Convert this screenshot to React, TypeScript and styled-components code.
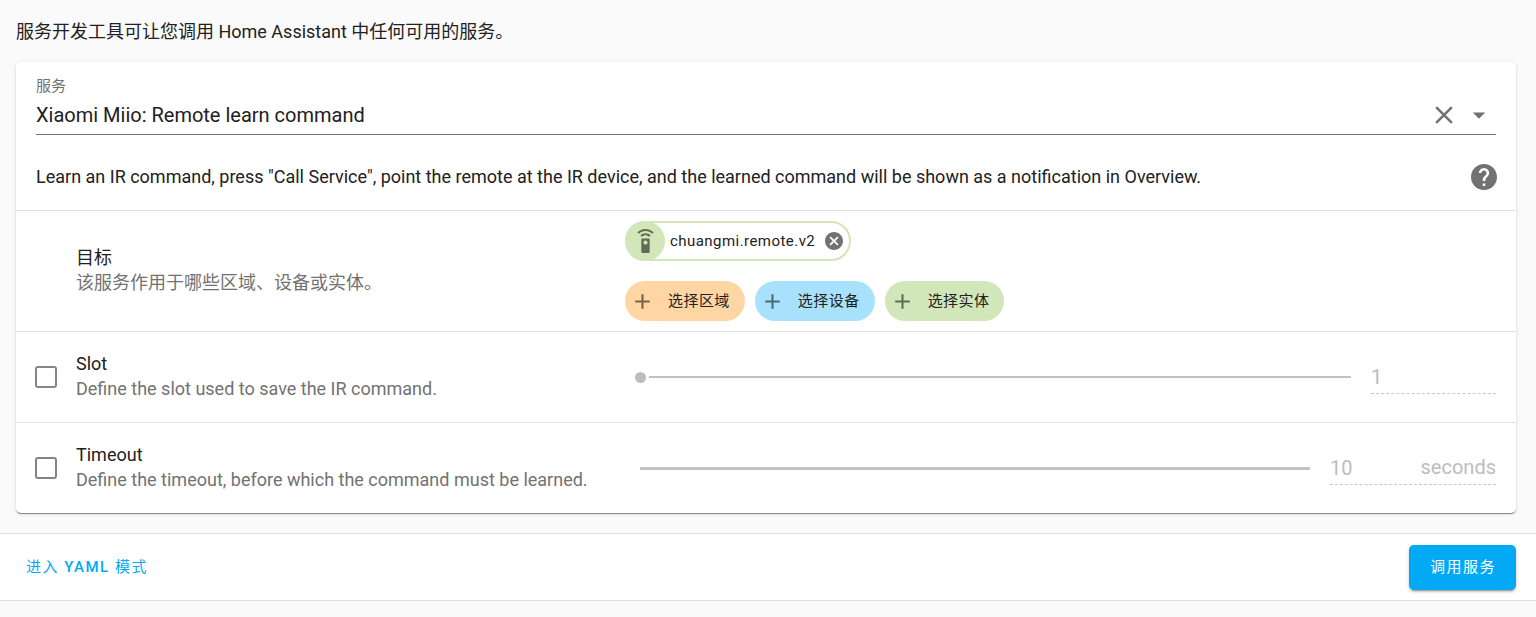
import React, { useState } from "react";
import styled, { createGlobalStyle, css } from "styled-components";

const color = {
  text: "#212121",
  secondary: "#727272",
  disabled: "#bdbdbd",
  divider: "#e0e0e0",
  primary: "#03a9f4",
  area: "#fed6a4",
  device: "#a8e1fb",
  entity: "#d2e7b9",
};

const GlobalStyle = createGlobalStyle`
  *, *::before, *::after { box-sizing: border-box; }
  body {
    margin: 0;
    background: #fafafa;
    color: ${color.text};
    font-family: Roboto, "Noto Sans CJK SC", sans-serif;
    font-size: 18px;
    line-height: 25px;
  }
  button, input { font: inherit; color: inherit; }
  button { padding: 0; border: 0; background: none; cursor: pointer; }
  p, h2 { margin: 0; font-size: inherit; font-weight: 400; }
`;

const Content = styled.main`
  padding: 19px 20px 20px 16px;
`;

const Intro = styled.p`
  margin-bottom: 18px;
`;

const Card = styled.section`
  background: #fff;
  border-radius: 5px;
  box-shadow: 0 2px 1px -1px rgba(0, 0, 0, 0.3), 0 1px 1px rgba(0, 0, 0, 0.18),
    0 1px 4px rgba(0, 0, 0, 0.12);
`;

const Picker = styled.div`
  padding: 12px 20px 0;
`;

const PickerLabel = styled.label`
  display: block;
  font-size: 15px;
  color: ${color.secondary};
`;

const PickerField = styled.div`
  display: flex;
  align-items: center;
  gap: 5px;
  height: 36px;
  padding-right: 2px;
  border-bottom: 1px solid ${color.secondary};
`;

const PickerInput = styled.input`
  flex: 1;
  min-width: 0;
  height: 30px;
  margin-bottom: 4px;
  padding: 0;
  border: 0;
  outline: 0;
  background: none;
  font-size: 20px;
`;

const IconButton = styled.button`
  display: flex;
  flex: none;
  color: ${color.secondary};
`;

const FieldIcon = styled(IconButton)`
  margin-bottom: 4px;
`;

const Description = styled.div`
  display: flex;
  align-items: center;
  justify-content: space-between;
  gap: 20px;
  min-height: 75px;
  padding: 9px 19px 0 20px;
`;

const DescriptionText = styled.p`
  padding-bottom: 1px;
`;

const Row = styled.div`
  display: flex;
  align-items: center;
  min-height: 91px;
  padding: 10px 20px;
  border-top: 1px solid ${color.divider};
`;

const Heading = styled.div<{ $inset?: boolean }>`
  flex: 1;
  display: flex;
  align-items: center;
  gap: 19px;
  min-width: 0;
  padding-left: ${(p) => (p.$inset ? "40px" : "0")};
`;

const HeadingText = styled.div`
  padding-bottom: 2px;
`;

const Secondary = styled.span`
  display: block;
  color: ${color.secondary};
`;

const Checkbox = styled.input`
  appearance: none;
  flex: none;
  width: 22px;
  height: 22px;
  margin: 0 0 0 -1px;
  border: 2px solid #858585;
  border-radius: 3px;
  background: #fff;
  &:checked {
    border-color: ${color.primary};
    background: ${color.primary};
  }
`;

const Control = styled.div<{ $indent: number }>`
  flex: none;
  width: 60%;
  display: flex;
  align-items: center;
  gap: 20px;
  padding-left: ${(p) => p.$indent}px;
`;

const Targets = styled.div`
  flex: none;
  width: 60%;
  display: flex;
  flex-direction: column;
  gap: 20px;
  padding-left: 5px;
`;

const ChipLine = styled.div`
  display: flex;
  flex-wrap: wrap;
  gap: 10px;
`;

const chipBase = css`
  display: flex;
  align-items: center;
  height: 40px;
  border-radius: 20px;
  font-size: 15px;
  letter-spacing: 0.03em;
`;

const EntityChip = styled.div`
  ${chipBase}
  padding-right: 6px;
  border: 2px solid ${color.entity};
`;

const ChipBadge = styled.span`
  display: flex;
  align-items: center;
  justify-content: center;
  width: 40px;
  height: 40px;
  margin: -2px 5px -2px -2px;
  border-radius: 50%;
  background: ${color.entity};
  color: #616b55;
`;

const ChipRemove = styled(IconButton)`
  margin-left: 10px;
`;

const AddChip = styled.button<{ $fill: string }>`
  ${chipBase}
  gap: 13px;
  && {
    padding: 0 15px 0 5px;
  }
  background: ${(p) => p.$fill};
  svg {
    color: rgba(0, 0, 0, 0.54);
  }
`;

const Slider = styled.input<{ $track: number; $knob: boolean }>`
  appearance: none;
  flex: 1;
  min-width: 0;
  height: 17px;
  margin: 0;
  background: none;
  &::-webkit-slider-runnable-track {
    height: ${(p) => p.$track}px;
    background: #c2c2c2;
  }
  &::-webkit-slider-thumb {
    appearance: none;
    width: 17px;
    height: 17px;
    margin-top: -7px;
    border: 3px solid #fff;
    border-radius: 50%;
    background: ${color.disabled};
    opacity: ${(p) => (p.$knob ? 1 : 0)};
  }
`;

const NumberField = styled.label<{ $width: number }>`
  display: flex;
  align-items: center;
  flex: none;
  width: ${(p) => p.$width}px;
  height: 33px;
  border-bottom: 1px dashed #c8c8c8;
  font-size: 20px;
  color: ${color.disabled};
`;

const NumberInput = styled.input`
  appearance: textfield;
  flex: 1;
  min-width: 0;
  width: 0;
  height: 30px;
  padding: 0;
  border: 0;
  background: none;
  &:disabled {
    color: ${color.disabled};
  }
`;

const Footer = styled.footer`
  display: flex;
  align-items: center;
  justify-content: space-between;
  height: 68px;
  padding: 0 20px 0 16px;
  background: #fff;
  border: solid ${color.divider};
  border-width: 1px 0;
`;

const buttonBase = css`
  height: 45px;
  border-radius: 5px;
  font-size: 15px;
  letter-spacing: 0.1em;
`;

const TextButton = styled.button`
  ${buttonBase}
  && {
    padding: 0 10px;
  }
  color: ${color.primary};
  b {
    font-weight: 500;
  }
`;

const RaisedButton = styled.button`
  ${buttonBase}
  && {
    padding: 0 20px 0 21px;
    background: ${color.primary};
  }
  color: #fff;
  box-shadow: 0 3px 1px -2px rgba(0, 0, 0, 0.2), 0 2px 2px rgba(0, 0, 0, 0.14),
    0 1px 5px rgba(0, 0, 0, 0.12);
`;

const icons = {
  close:
    "M19,6.41L17.59,5L12,10.59L6.41,5L5,6.41L10.59,12L5,17.59L6.41,19L12,13.41L17.59,19L19,17.59L13.41,12L19,6.41Z",
  menuDown: "M7,10L12,15L17,10H7Z",
  plus: "M19,13H13V19H11V13H5V11H11V5H13V11H19V13Z",
  help: "M15.07,11.25L14.17,12.17C13.45,12.89 13,13.5 13,15H11V14.5C11,13.39 11.45,12.39 12.17,11.67L13.41,10.41C13.78,10.05 14,9.55 14,9C14,7.89 13.1,7 12,7A2,2 0 0,0 10,9H8A4,4 0 0,1 12,5A4,4 0 0,1 16,9C16,9.88 15.64,10.67 15.07,11.25M13,19H11V17H13M12,2A10,10 0 0,0 2,12A10,10 0 0,0 12,22A10,10 0 0,0 22,12C22,6.47 17.5,2 12,2Z",
  closeCircle:
    "M12,2C17.53,2 22,6.47 22,12C22,17.53 17.53,22 12,22C6.47,22 2,17.53 2,12C2,6.47 6.47,2 12,2M15.59,7L12,10.59L8.41,7L7,8.41L10.59,12L7,15.59L8.41,17L12,13.41L15.59,17L17,15.59L13.41,12L17,8.41L15.59,7Z",
  remote:
    "M12,0C8.96,0 6.21,1.23 4.22,3.22L5.63,4.63C7.26,3 9.5,2 12,2C14.5,2 16.74,3 18.36,4.64L19.77,3.23C17.79,1.23 15.04,0 12,0M7.05,6.05L8.46,7.46C9.37,6.56 10.62,6 12,6C13.38,6 14.63,6.56 15.54,7.46L16.95,6.05C15.68,4.78 13.93,4 12,4C10.07,4 8.32,4.78 7.05,6.05M12,15A2,2 0 0,1 10,13A2,2 0 0,1 12,11A2,2 0 0,1 14,13A2,2 0 0,1 12,15M15,9H9A1,1 0 0,0 8,10V22A1,1 0 0,0 9,23H15A1,1 0 0,0 16,22V10A1,1 0 0,0 15,9Z",
};

function Icon({ name, size, tight }: { name: keyof typeof icons; size: number; tight?: boolean }) {
  return (
    <svg
      width={size}
      height={size}
      viewBox={tight ? "2 2 20 20" : "0 0 24 24"}
      fill="currentColor"
      aria-hidden="true"
    >
      <path d={icons[name]} />
    </svg>
  );
}

type FieldProps = {
  id: string;
  title: string;
  help: string;
  initial: number;
  min: number;
  max: number;
  unit?: string;
  width: number;
  indent: number;
  track: number;
  knob: boolean;
};

function FieldRow(p: FieldProps) {
  const [enabled, setEnabled] = useState(false);
  const [value, setValue] = useState(p.initial);
  const change = (e: React.ChangeEvent<HTMLInputElement>) => setValue(Number(e.target.value));
  return (
    <Row>
      <Heading>
        <Checkbox
          type="checkbox"
          id={p.id}
          checked={enabled}
          onChange={(e) => setEnabled(e.target.checked)}
        />
        <HeadingText as="label" htmlFor={p.id}>
          {p.title}
          <Secondary>{p.help}</Secondary>
        </HeadingText>
      </Heading>
      <Control $indent={p.indent}>
        <Slider
          type="range"
          aria-label={p.title}
          min={p.min}
          max={p.max}
          value={value}
          disabled={!enabled}
          onChange={change}
          $track={p.track}
          $knob={p.knob || enabled}
        />
        <NumberField $width={p.width}>
          <NumberInput
            type="number"
            aria-label={p.title}
            value={value}
            disabled={!enabled}
            onChange={change}
          />
          {p.unit}
        </NumberField>
      </Control>
    </Row>
  );
}

export default function App() {
  const [service, setService] = useState("Xiaomi Miio: Remote learn command");
  return (
    <>
      <GlobalStyle />
      <Content>
        <Intro>服务开发工具可让您调用 Home Assistant 中任何可用的服务。</Intro>
        <Card>
          <Picker>
            <PickerLabel htmlFor="service">服务</PickerLabel>
            <PickerField>
              <PickerInput
                id="service"
                type="text"
                value={service}
                onChange={(e) => setService(e.target.value)}
              />
              <FieldIcon aria-label="清除" onClick={() => setService("")}>
                <Icon name="close" size={30} />
              </FieldIcon>
              <FieldIcon aria-label="展开">
                <Icon name="menuDown" size={30} />
              </FieldIcon>
            </PickerField>
          </Picker>
          <Description>
            <DescriptionText>
              Learn an IR command, press "Call Service", point the remote at the IR device, and the
              learned command will be shown as a notification in Overview.
            </DescriptionText>
            <IconButton aria-label="帮助">
              <Icon name="help" size={26} tight />
            </IconButton>
          </Description>
          <Row>
            <Heading $inset>
              <HeadingText>
                <h2>目标</h2>
                <Secondary>该服务作用于哪些区域、设备或实体。</Secondary>
              </HeadingText>
            </Heading>
            <Targets>
              <ChipLine>
                <EntityChip>
                  <ChipBadge>
                    <Icon name="remote" size={25} />
                  </ChipBadge>
                  chuangmi.remote.v2
                  <ChipRemove aria-label="移除">
                    <Icon name="closeCircle" size={18} tight />
                  </ChipRemove>
                </EntityChip>
              </ChipLine>
              <ChipLine>
                <AddChip $fill={color.area}>
                  <Icon name="plus" size={25} />
                  选择区域
                </AddChip>
                <AddChip $fill={color.device}>
                  <Icon name="plus" size={25} />
                  选择设备
                </AddChip>
                <AddChip $fill={color.entity}>
                  <Icon name="plus" size={25} />
                  选择实体
                </AddChip>
              </ChipLine>
            </Targets>
          </Row>
          <FieldRow
            id="slot"
            title="Slot"
            help="Define the slot used to save the IR command."
            initial={1}
            min={1}
            max={1000000}
            width={125}
            indent={12}
            track={2}
            knob
          />
          <FieldRow
            id="timeout"
            title="Timeout"
            help="Define the timeout, before which the command must be learned."
            initial={10}
            min={1}
            max={300}
            unit="seconds"
            width={166}
            indent={20}
            track={3}
            knob={false}
          />
        </Card>
      </Content>
      <Footer>
        <TextButton>
          进入 <b>YAML</b> 模式
        </TextButton>
        <RaisedButton>调用服务</RaisedButton>
      </Footer>
    </>
  );
}
